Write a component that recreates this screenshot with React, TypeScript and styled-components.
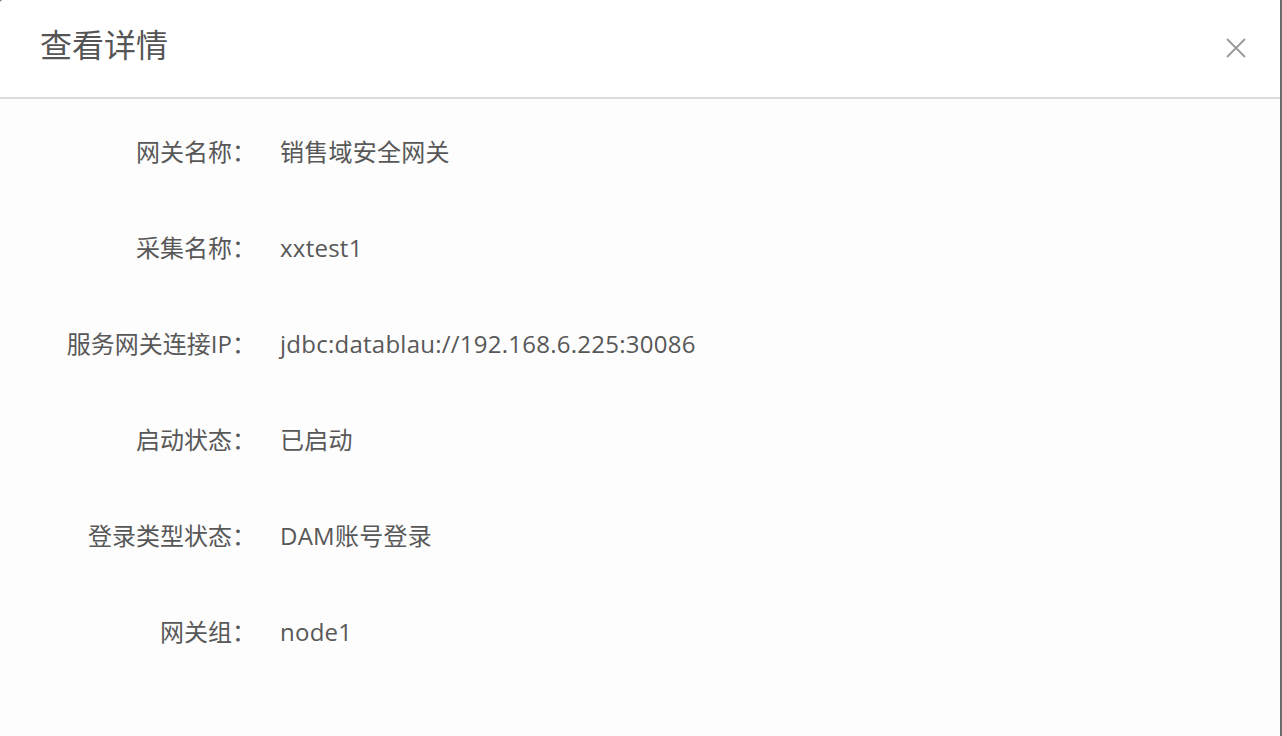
import styled, { createGlobalStyle } from 'styled-components'

const GlobalStyle = createGlobalStyle`
  html, body {
    margin: 0;
    padding: 0;
    background: #6b6b6b;
    overflow: hidden;
  }
  * {
    box-sizing: border-box;
  }
`

const Dialog = styled.div`
  width: 1280px;
  height: 736px;
  background: #fff;
  border-top-left-radius: 3px;
  font-family: 'Open Sans', 'Noto Sans CJK SC', sans-serif;
  display: flex;
  flex-direction: column;
`

const Header = styled.div`
  height: 99px;
  flex-shrink: 0;
  border-bottom: 2px solid #dcdcdc;
  display: flex;
  align-items: center;
  justify-content: space-between;
  padding: 0 28px 0 40px;
`

const Title = styled.h2`
  margin: 0 0 8px;
  font-size: 32px;
  line-height: 1;
  font-weight: 400;
  color: #555;
`

const CloseButton = styled.button`
  width: 32px;
  height: 32px;
  border: none;
  background: transparent;
  padding: 0;
  margin-bottom: 2px;
  cursor: pointer;
  display: flex;
  align-items: center;
  justify-content: center;
`

const Body = styled.div`
  flex: 1;
  background: #fdfdfd;
  padding-top: 5px;
  display: flex;
  flex-direction: column;
`

const Row = styled.div`
  height: 96px;
  flex-shrink: 0;
  display: flex;
  align-items: center;
  font-size: 24px;
  line-height: 1;
  color: #585858;
`

const Label = styled.div`
  width: 256px;
  text-align: right;
  flex-shrink: 0;
`

const Value = styled.div`
  padding-left: 24px;
  letter-spacing: 0.25px;
`

const rows: [string, string][] = [
  ['网关名称：', '销售域安全网关'],
  ['采集名称：', 'xxtest1'],
  ['服务网关连接IP：', 'jdbc:datablau://192.168.6.225:30086'],
  ['启动状态：', '已启动'],
  ['登录类型状态：', 'DAM账号登录'],
  ['网关组：', 'node1'],
]

export default function App() {
  return (
    <>
      <GlobalStyle />
      <Dialog>
        <Header>
          <Title>查看详情</Title>
          <CloseButton aria-label="关闭">
            <svg width="20" height="20" viewBox="0 0 20 20">
              <path d="M1 1 L19 19 M19 1 L1 19" stroke="#999" strokeWidth="1.8" fill="none" />
            </svg>
          </CloseButton>
        </Header>
        <Body>
          {rows.map(([label, value]) => (
            <Row key={label}>
              <Label>{label}</Label>
              <Value>{value}</Value>
            </Row>
          ))}
        </Body>
      </Dialog>
    </>
  )
}
